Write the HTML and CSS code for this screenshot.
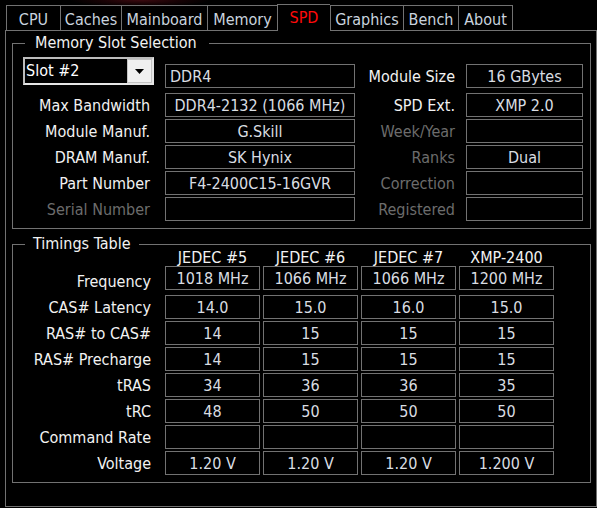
FILE: index.html
```html
<!DOCTYPE html>
<html lang="en">
<head>
<meta charset="utf-8">
<title>CPU-Z SPD</title>
<link rel="stylesheet" href="styles.css">
</head>
<body>
<div class="app">
  <nav class="tabs">
    <div class="tab tab-cpu">CPU</div>
    <div class="tab tab-caches">Caches</div>
    <div class="tab tab-mainboard">Mainboard</div>
    <div class="tab tab-memory">Memory</div>
    <div class="tab tab-spd active">SPD</div>
    <div class="tab tab-graphics">Graphics</div>
    <div class="tab tab-bench">Bench</div>
    <div class="tab tab-about">About</div>
  </nav>
  <div class="panel">
    <fieldset class="group">
      <legend class="legend-slot">Memory Slot Selection</legend>
      <div class="slot-grid">
        <div class="select">
          <span class="select-text">Slot #2</span>
          <span class="select-btn"><svg width="9" height="5" viewBox="0 0 9 5"><path d="M0 0H9L4.5 5Z" fill="#000"/></svg></span>
        </div>
        <div class="box box-left">DDR4</div>
        <div class="lbl lbl-right">Module Size</div>
        <div class="box">16 GBytes</div>

        <div class="lbl">Max Bandwidth</div>
        <div class="box">DDR4-2132 (1066 MHz)</div>
        <div class="lbl lbl-right">SPD Ext.</div>
        <div class="box">XMP 2.0</div>

        <div class="lbl">Module Manuf.</div>
        <div class="box">G.Skill</div>
        <div class="lbl lbl-right dim">Week/Year</div>
        <div class="box"></div>

        <div class="lbl">DRAM Manuf.</div>
        <div class="box">SK Hynix</div>
        <div class="lbl lbl-right dim">Ranks</div>
        <div class="box">Dual</div>

        <div class="lbl">Part Number</div>
        <div class="box">F4-2400C15-16GVR</div>
        <div class="lbl lbl-right dim">Correction</div>
        <div class="box"></div>

        <div class="lbl dim">Serial Number</div>
        <div class="box"></div>
        <div class="lbl lbl-right dim">Registered</div>
        <div class="box"></div>
      </div>
    </fieldset>

    <fieldset class="group group-timings">
      <legend class="legend-timings">Timings Table</legend>
      <div class="t-grid">
        <div></div>
        <div class="th">JEDEC #5</div>
        <div class="th">JEDEC #6</div>
        <div class="th">JEDEC #7</div>
        <div class="th">XMP-2400</div>

        <div class="tl tl-freq">Frequency</div>
        <div class="box">1018 MHz</div>
        <div class="box">1066 MHz</div>
        <div class="box">1066 MHz</div>
        <div class="box">1200 MHz</div>

        <div class="tl">CAS# Latency</div>
        <div class="box">14.0</div>
        <div class="box">15.0</div>
        <div class="box">16.0</div>
        <div class="box">15.0</div>

        <div class="tl">RAS# to CAS#</div>
        <div class="box">14</div>
        <div class="box">15</div>
        <div class="box">15</div>
        <div class="box">15</div>

        <div class="tl">RAS# Precharge</div>
        <div class="box">14</div>
        <div class="box">15</div>
        <div class="box">15</div>
        <div class="box">15</div>

        <div class="tl">tRAS</div>
        <div class="box">34</div>
        <div class="box">36</div>
        <div class="box">36</div>
        <div class="box">35</div>

        <div class="tl">tRC</div>
        <div class="box">48</div>
        <div class="box">50</div>
        <div class="box">50</div>
        <div class="box">50</div>

        <div class="tl">Command Rate</div>
        <div class="box"></div>
        <div class="box"></div>
        <div class="box"></div>
        <div class="box"></div>

        <div class="tl">Voltage</div>
        <div class="box">1.20 V</div>
        <div class="box">1.20 V</div>
        <div class="box">1.20 V</div>
        <div class="box">1.200 V</div>
      </div>
    </fieldset>
  </div>
</div>
</body>
</html>
```

FILE: styles.css
```css
* {
  box-sizing: border-box;
}

html,
body {
  margin: 0;
  padding: 0;
}

body {
  width: 597px;
  height: 508px;
  overflow: hidden;
  background:
    radial-gradient(ellipse 70px 7px at 140px 0, #3c0a10 0%, rgba(40, 4, 8, 0.6) 55%, transparent 100%),
    #000;
  font-family: "DejaVu Sans Condensed", "DejaVu Sans", sans-serif;
  font-size: 16px;
  color: #f2f2f2;
}

.app {
  width: 597px;
  height: 508px;
}

/* ---------- tabs ---------- */
.tabs {
  display: flex;
  align-items: flex-end;
  padding: 4px 0 0 6px;
}

.tab {
  height: 25px;
  padding-top: 3px;
  line-height: 21px;
  text-align: center;
  white-space: nowrap;
  color: #c9d3de;
  border-top: 1px solid #727272;
  border-left: 1px solid #727272;
}

.tab:last-child {
  border-right: 1px solid #727272;
}

.tab.active {
  position: relative;
  z-index: 1;
  height: 27px;
  margin-bottom: -1px;
  padding-top: 2px;
  background: #000;
  color: #ff0a0a;
}

.tab-cpu { width: 54px; }
.tab-caches { width: 61px; }
.tab-mainboard { width: 86px; }
.tab-memory { width: 70px; }
.tab-spd { width: 53px; }
.tab-graphics { width: 73px; }
.tab-bench { width: 55px; }
.tab-about { width: 55px; }

/* ---------- main panel ---------- */
.panel {
  position: relative;
  margin-left: 5px;
  width: 592px;
  height: 477px;
  border: 1px solid #727272;
}

.group {
  margin: 5px 0 0 6px;
  padding: 7px 0 7px 0;
  width: 579px;
  min-inline-size: 0;
  border: 1px solid #727272;
}

.group-timings {
  margin-top: 8px;
  padding-top: 1px;
}

.group legend {
  margin-left: 12px;
  line-height: 14px;
  color: #f2f2f2;
}

.legend-slot {
  padding: 0 12px 0 10px;
}

.legend-timings {
  padding: 0 8px 0 8px;
}

/* ---------- slot grid ---------- */
.slot-grid {
  display: grid;
  grid-template-columns: 152px 190px 111px 117px;
  grid-template-rows: 31px 27px repeat(4, 24px);
  row-gap: 2px;
  align-items: end;
}

.lbl {
  height: 24px;
  padding-top: 2px;
  line-height: 22px;
  text-align: right;
  padding-right: 15px;
  white-space: nowrap;
}

.lbl-right {
  padding-right: 11px;
}

.dim {
  color: #6c6c6c;
}

.box {
  height: 24px;
  padding-top: 2px;
  line-height: 20px;
  border: 1px solid #727272;
  text-align: center;
  color: #d9dde2;
  white-space: nowrap;
  overflow: hidden;
}

.box-left {
  text-align: left;
  padding-left: 4px;
}

.select {
  align-self: start;
  display: flex;
  margin-left: 10px;
  width: 131px;
  height: 28px;
  border: 2px solid #e6e6e6;
  border-top-color: #bdbdbd;
  border-left-color: #bdbdbd;
  background: #000;
}

.select-text {
  flex: 1;
  padding-left: 1px;
  line-height: 24px;
  color: #ffffff;
}

.select-btn {
  display: flex;
  align-items: center;
  justify-content: center;
  width: 25px;
  height: 24px;
  background: #f0f0f0;
  border: 1px solid #c4c4c4;
}

/* ---------- timings grid ---------- */
.t-grid {
  display: grid;
  grid-template-columns: 149px repeat(4, 95px);
  grid-template-rows: 12px 24px 27px repeat(6, 24px);
  column-gap: 3px;
  row-gap: 2px;
  align-items: end;
}

.th {
  line-height: 12px;
  text-align: center;
  white-space: nowrap;
  color: #f2f2f2;
}

.tl {
  height: 24px;
  padding-top: 2px;
  line-height: 22px;
  text-align: right;
  padding-right: 11px;
  white-space: nowrap;
}

.tl-freq {
  margin-bottom: -3px;
}
```
